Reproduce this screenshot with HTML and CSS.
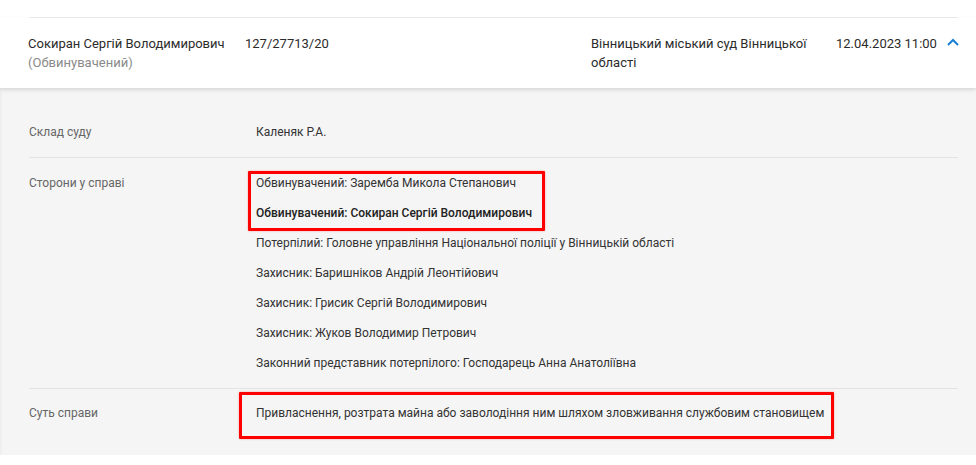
FILE: index.html
```html
<!DOCTYPE html>
<html lang="uk">
<head>
<meta charset="utf-8">
<link rel="stylesheet" href="styles.css">
</head>
<body>
<div class="prev-row"></div>
<div class="case-header">
  <div class="accent"></div>
  <div class="header-cells">
    <div class="cell name">
      <div>Сокиран Сергій Володимирович</div>
      <div class="role">(Обвинувачений)</div>
    </div>
    <div class="cell number">127/27713/20</div>
    <div class="cell court">Вінницький міський суд Вінницької області</div>
    <div class="cell date">12.04.2023 11:00</div>
    <div class="cell toggle">
      <svg width="12" height="8" viewBox="0 0 12 8"><path d="M1 7 L6 2 L11 7" fill="none" stroke="#1a7fd6" stroke-width="2"/></svg>
    </div>
  </div>
</div>
<div class="details">
  <div class="row first">
    <div class="label">Склад суду</div>
    <div class="value">Каленяк Р.А.</div>
  </div>
  <div class="row">
    <div class="label">Сторони у справі</div>
    <div class="value list">
      <div>Обвинувачений: Заремба Микола Степанович</div>
      <div class="strong">Обвинувачений: Сокиран Сергій Володимирович</div>
      <div>Потерпілий: Головне управління Національної поліції у Вінницькій області</div>
      <div>Захисник: Баришніков Андрій Леонтійович</div>
      <div>Захисник: Грисик Сергій Володимирович</div>
      <div>Захисник: Жуков Володимир Петрович</div>
      <div>Законний представник потерпілого: Господарець Анна Анатоліївна</div>
    </div>
  </div>
  <div class="row last">
    <div class="label">Суть справи</div>
    <div class="value">Привласнення, розтрата майна або заволодіння ним шляхом зловживання службовим становищем</div>
  </div>
  <div class="mark mark-parties"></div>
  <div class="mark mark-essence"></div>
</div>
</body>
</html>
```
FILE: styles.css
```css
* { box-sizing: border-box; }
html, body { margin: 0; padding: 0; background: #fff; }
body {
  font-family: Roboto, "Noto Sans", Arial, sans-serif;
  font-size: 13px;
  line-height: 18px;
  color: #333;
}
.prev-row {
  height: 18px;
  margin: 0 18px 0 29px;
  border-bottom: 1px solid #ebebf0;
}
.case-header {
  display: flex;
  background: #fff;
  height: 70px;
  position: relative;
  z-index: 1;
  box-shadow: 0 2px 4px rgba(0,0,0,0.12);
}
.accent {
  width: 3px;
  margin-top: 17px;
  background: #d9720e;
}
.header-cells {
  flex: 1;
  display: flex;
  padding: 16px 18px 0 28px;
  line-height: 19px;
  color: #2b2b2b;
}
.cell.name { width: 217px; }
.role { color: #8a8a8a; }
.cell.number { width: 346px; }
.cell.court { width: 245px; padding-right: 24px; }
.cell.date { width: 111px; }
.cell.toggle { flex: 1; display: flex; justify-content: flex-end; padding-top: 4px; }
.toggle svg { display: block; }
.details {
  position: relative;
  background: #f5f5f5;
  padding: 17px 18px 17px 27px;
  height: 367px;
  border-left: 2px solid #efefef;
  font-size: 12px;
}
.row {
  display: flex;
  padding: 16px 0;
  border-bottom: 1px solid #e3e3e3;
}
.row.first { padding-top: 18px; padding-bottom: 16px; }
.row.last { border-bottom: none; padding-top: 15px; }
.label { width: 227px; color: #666; }
.value { flex: 1; color: #333; }
.list { display: flex; flex-direction: column; gap: 12px; }
.strong { font-weight: 500; color: #222; }
.mark {
  position: absolute;
  border: 3px solid #ff0000;
  border-radius: 1px;
  box-shadow: 0 0 2px rgba(255,0,0,0.4);
}
.mark-parties { left: 246px; top: 83px; width: 297px; height: 60px; }
.mark-essence { left: 237px; top: 304px; width: 595px; height: 47px; }
```
